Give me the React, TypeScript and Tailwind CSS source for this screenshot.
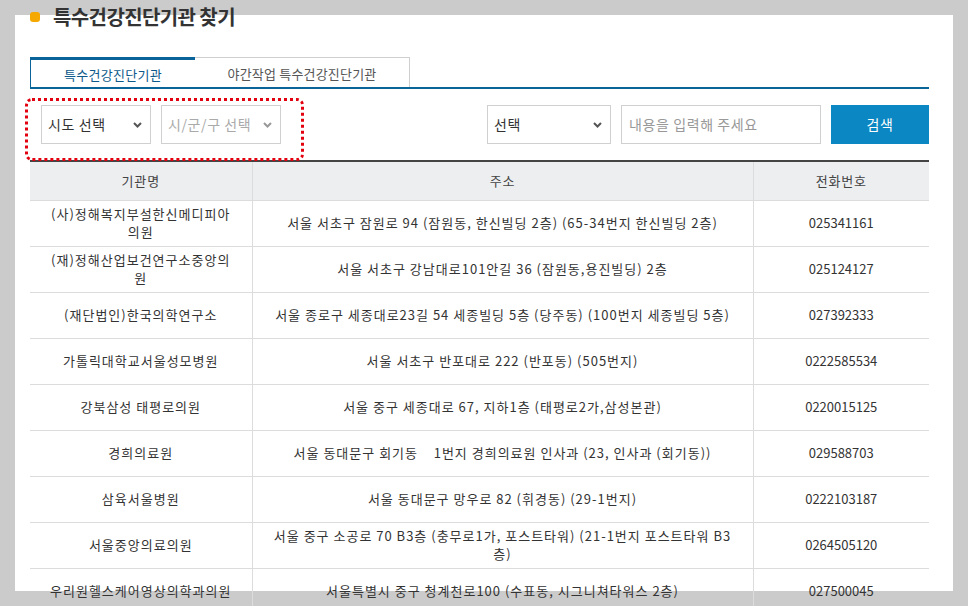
import React from "react"

interface Clinic {
  name: string
  address: string
  phone: string
}

const clinics: Clinic[] = [
  {
    name: "(사)정해복지부설한신메디피아의원",
    address: "서울 서초구 잠원로 94 (잠원동, 한신빌딩 2층) (65-34번지 한신빌딩 2층)",
    phone: "025341161",
  },
  {
    name: "(재)정해산업보건연구소중앙의원",
    address: "서울 서초구 강남대로101안길 36 (잠원동,용진빌딩) 2층",
    phone: "025124127",
  },
  {
    name: "(재단법인)한국의학연구소",
    address: "서울 종로구 세종대로23길 54 세종빌딩 5층 (당주동) (100번지 세종빌딩 5층)",
    phone: "027392333",
  },
  {
    name: "가톨릭대학교서울성모병원",
    address: "서울 서초구 반포대로 222 (반포동) (505번지)",
    phone: "0222585534",
  },
  {
    name: "강북삼성 태평로의원",
    address: "서울 중구 세종대로 67, 지하1층 (태평로2가,삼성본관)",
    phone: "0220015125",
  },
  {
    name: "경희의료원",
    address: "서울 동대문구 회기동\u00a0\u00a0\u00a0 1번지 경희의료원 인사과 (23, 인사과 (회기동))",
    phone: "029588703",
  },
  {
    name: "삼육서울병원",
    address: "서울 동대문구 망우로 82 (휘경동) (29-1번지)",
    phone: "0222103187",
  },
  {
    name: "서울중앙의료의원",
    address: "서울 중구 소공로 70 B3층 (충무로1가, 포스트타워) (21-1번지 포스트타워 B3층)",
    phone: "0264505120",
  },
  {
    name: "우리원헬스케어영상의학과의원",
    address: "서울특별시 중구 청계천로100 (수표동, 시그니쳐타워스 2층)",
    phone: "027500045",
  },
]

// small chevron used by the fake selects
function Chevron({ color }: { color: string }) {
  return (
    <svg width="9" height="6" viewBox="0 0 9 6" className="shrink-0">
      <path d="M1 1 L4.5 4.5 L8 1" fill="none" stroke={color} strokeWidth="2" />
    </svg>
  )
}

export default function App() {
  return (
    <div
      className="h-[606px] w-[968px] overflow-hidden bg-[#cbcbcb] pl-[15px] pt-[15px] text-[#333]"
      style={{ fontFamily: '"Noto Sans CJK KR", "Noto Sans", sans-serif' }}
    >
      <div className="flex h-[576px] w-[938px] flex-col bg-white pl-[15px] pr-[24px]">
        {/* Title */}
        <div className="-mt-[10px] flex h-[24px] items-center">
          <span className="h-[10px] w-[10px] rounded-[3px] bg-[#f5a800]" />
          <h1 className="ml-[13px] text-[20px] font-bold leading-[24px] tracking-[-0.6px] text-[#333]">
            특수건강진단기관 찾기
          </h1>
        </div>

        {/* Tabs */}
        <div className="mt-[28px] flex border-b-2 border-[#0a6499]">
          <div className="flex h-[30px] w-[165px] items-center justify-center border-l border-t-[3px] border-[#0a6499] bg-white pt-[2px] text-[13px] tracking-[0.3px] text-[#0d5a8a]">
            특수건강진단기관
          </div>
          <div className="flex h-[30px] w-[215px] items-center justify-center border-r border-t border-[#cfcfcf] pt-[3px] text-[13px] tracking-[0.2px] text-[#555]">
            야간작업 특수건강진단기관
          </div>
        </div>

        {/* Search bar */}
        <div className="relative mt-[16px] flex h-[39px] items-center text-[14px] tracking-[0.6px]">
          <div className="ml-[11px] flex h-[39px] w-[110px] items-center justify-between border border-[#d0d0d0] pl-[6px] pr-[8px] text-[#333]">
            시도 선택
            <Chevron color="#555" />
          </div>
          <div className="ml-[10px] flex h-[39px] w-[120px] items-center justify-between border border-[#d0d0d0] pl-[6px] pr-[8px] text-[#aaa]">
            시/군/구 선택
            <Chevron color="#999" />
          </div>

          {/* red dotted highlight */}
          <div className="absolute left-[-5px] top-[-7px] h-[63px] w-[279px] rounded-[7px] border-[3px] border-dotted border-[#e3000f]" />

          <div className="ml-auto flex h-[39px] w-[124px] items-center justify-between border border-[#d0d0d0] pl-[6px] pr-[8px] text-[#333]">
            선택
            <Chevron color="#555" />
          </div>
          <div className="ml-[10px] flex h-[39px] w-[200px] items-center border border-[#d0d0d0] pl-[7px] text-[#999]">
            내용을 입력해 주세요
          </div>
          <button className="ml-[10px] h-[39px] w-[98px] bg-[#0b87c3] text-white">검색</button>
        </div>

        {/* Result table */}
        <table className="mt-[16px] w-[899px] shrink-0 table-fixed border-collapse border-t-2 border-[#444] text-[13px] leading-[18px]">
          <colgroup>
            <col className="w-[222px]" />
            <col className="w-[501px]" />
            <col className="w-[176px]" />
          </colgroup>
          <thead>
            <tr className="h-[39px] bg-[#edeef0] tracking-[0.8px] text-[#444]">
              <th className="border-b border-r border-[#dcdcdc] font-normal">기관명</th>
              <th className="border-b border-r border-[#dcdcdc] font-normal">주소</th>
              <th className="border-b border-[#dcdcdc] font-normal">전화번호</th>
            </tr>
          </thead>
          <tbody>
            {clinics.map((c) => (
              <tr key={c.name} className="h-[46px]">
                <td className="border-b border-r border-[#dcdcdc] px-[20px] text-center tracking-[1px]">{c.name}</td>
                <td className="border-b border-r border-[#dcdcdc] px-[20px] text-center tracking-[1px]">{c.address}</td>
                <td className="border-b border-[#dcdcdc] text-center">{c.phone}</td>
              </tr>
            ))}
          </tbody>
        </table>
      </div>
    </div>
  )
}
